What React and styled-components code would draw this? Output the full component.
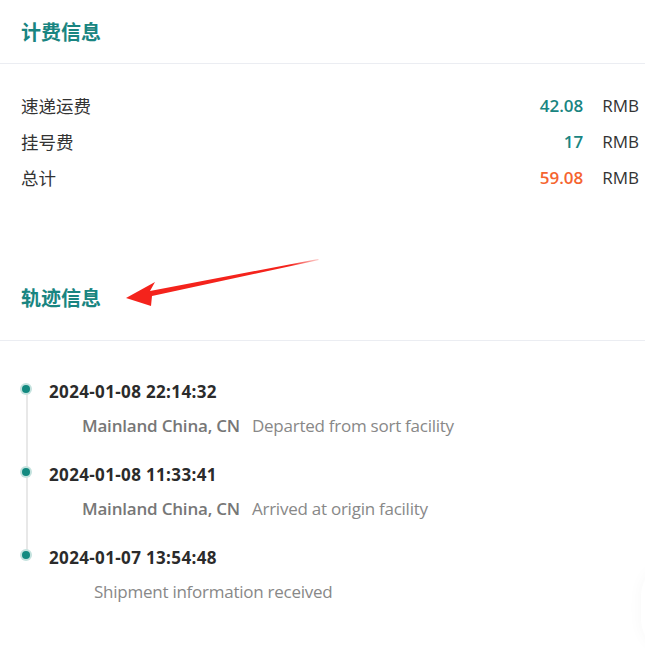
import React from "react";
import styled, { createGlobalStyle } from "styled-components";

const Global = createGlobalStyle`
  html, body { margin: 0; padding: 0; background: #fff; }
  body { font-family: "Open Sans", "Noto Sans CJK SC", sans-serif; color: #333; }
`;

const Page = styled.div`
  position: relative;
  width: 645px;
  height: 671px;
  overflow: hidden;
  background: #fff;
`;

const SectionHeader = styled.div`
  height: ${(p) => p.$h}px;
  padding-top: ${(p) => p.$top || 0}px;
  box-sizing: border-box;
  display: flex;
  align-items: center;
  padding-left: 21px;
  border-bottom: 1px solid #ebedf2;
`;

const Title = styled.h2`
  margin: 0;
  font-size: 20px;
  font-weight: 700;
  color: #198581;
  font-family: "Noto Sans CJK SC", sans-serif;
`;

const FeeList = styled.div`
  padding: 23px 6px 0 21px;
  display: flex;
  flex-direction: column;
`;

const FeeRow = styled.div`
  display: flex;
  align-items: center;
  height: 36px;
`;

const FeeLabel = styled.span`
  flex: 1;
  font-size: 17.5px;
  color: #333;
  font-family: "Noto Sans CJK SC", sans-serif;
`;

const FeeValue = styled.span`
  font-size: 17px;
  font-weight: 600;
  color: ${(p) => (p.$total ? "#f5642f" : "#198581")};
`;

const Unit = styled.span`
  font-size: 17px;
  color: #333;
  margin-left: 19px;
`;

const Timeline = styled.div`
  padding: 39px 0 0 21px;
  display: flex;
  flex-direction: column;
`;

const Item = styled.div`
  position: relative;
  height: 83px;
  padding-left: 28px;
  &::before {
    content: "";
    display: ${(p) => (p.$last ? "none" : "block")};
    position: absolute;
    left: 5px;
    top: 9px;
    width: 2px;
    height: 83px;
    background: #e8e8e8;
  }
`;

const Dot = styled.span`
  position: absolute;
  left: 1px;
  top: 5px;
  width: 8px;
  height: 8px;
  border-radius: 50%;
  background: #138a80;
  box-shadow: 0 0 0 2px #c4e2de;
`;

const Time = styled.div`
  padding-top: 2px;
  font-size: 17px;
  font-weight: 700;
  color: #2b2b2b;
  line-height: 20px;
  letter-spacing: 0.35px;
`;

const Detail = styled.div`
  display: flex;
  gap: 12px;
  margin-top: 14px;
  padding-left: 33px;
  font-size: 17px;
  line-height: 20px;
`;

const Place = styled.span`
  font-weight: 600;
  color: #777;
  letter-spacing: -0.2px;
`;

const Desc = styled.span`
  color: #888;
  letter-spacing: -0.25px;
`;

const Arrow = styled.svg`
  position: absolute;
  left: 120px;
  top: 258px;
`;

const FloatShadow = styled.div`
  position: absolute;
  right: -62px;
  top: 565px;
  width: 66px;
  height: 85px;
  border-radius: 30px;
  box-shadow: 0 0 16px rgba(0, 0, 0, 0.035);
  background: #fff;
`;

const fees = [
  { label: "速递运费", value: "42.08" },
  { label: "挂号费", value: "17" },
  { label: "总计", value: "59.08", total: true },
];

const events = [
  { time: "2024-01-08 22:14:32", place: "Mainland China, CN", desc: "Departed from sort facility" },
  { time: "2024-01-08 11:33:41", place: "Mainland China, CN", desc: "Arrived at origin facility" },
  { time: "2024-01-07 13:54:48", place: "", desc: "Shipment information received" },
];

export default function App() {
  return (
    <Page>
      <Global />
      <SectionHeader $h={64}>
        <Title>计费信息</Title>
      </SectionHeader>
      <FeeList>
        {fees.map((f) => (
          <FeeRow key={f.label}>
            <FeeLabel>{f.label}</FeeLabel>
            <FeeValue $total={f.total}>{f.value}</FeeValue>
            <Unit>RMB</Unit>
          </FeeRow>
        ))}
      </FeeList>
      <SectionHeader $h={146} $top={60}>
        <Title>轨迹信息</Title>
      </SectionHeader>
      <Timeline>
        {events.map((e, i) => (
          <Item key={e.time} $last={i === events.length - 1}>
            <Dot />
            <Time>{e.time}</Time>
            <Detail>
              <Place>{e.place}</Place>
              <Desc>{e.desc}</Desc>
            </Detail>
          </Item>
        ))}
      </Timeline>
      <Arrow width="205" height="55" viewBox="0 0 205 55">
        <defs>
          <linearGradient id="ag" x1="0" y1="0" x2="1" y2="0">
            <stop offset="0" stopColor="#f4231c" />
            <stop offset="0.85" stopColor="#f4231c" />
            <stop offset="1" stopColor="#f4231c" stopOpacity="0.2" />
          </linearGradient>
        </defs>
        <polygon
          points="6,40 35,24 30,33 198,1 199,2 32,38 31,48"
          fill="url(#ag)"
        />
      </Arrow>
      <FloatShadow />
    </Page>
  );
}
